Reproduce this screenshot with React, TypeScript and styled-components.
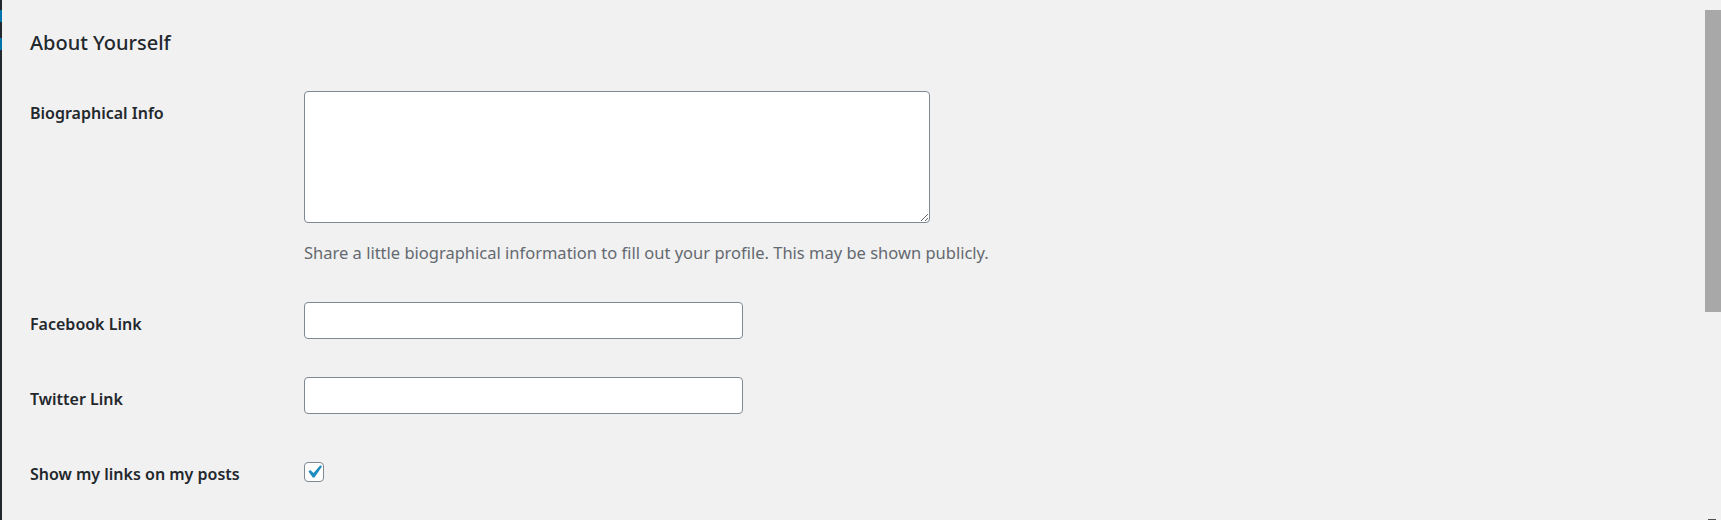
import React from "react";
import styled, { createGlobalStyle } from "styled-components";

const Global = createGlobalStyle`
  html, body { margin: 0; padding: 0; background: #f1f1f1; overflow: hidden; }
  body { font-family: "Noto Sans", "Open Sans", sans-serif; color: #23282d; }
  * { box-sizing: border-box; }
`;

const Shell = styled.div`
  display: flex;
  width: 100vw;
  height: 520px;
  background: #f1f1f1;
`;

const AdminEdge = styled.div`
  width: 2px;
  flex: none;
  display: flex;
  flex-direction: column;
  background: #23282d;
  padding-top: 10px;
  gap: 16px;
`;

const EdgeMark = styled.div`
  height: 12px;
  background: #0073aa;
`;

const Main = styled.main`
  flex: 1;
  padding-left: 28px;
  padding-top: 29px;
`;

const Heading = styled.h2`
  margin: 0 0 34px;
  font-size: 20px;
  line-height: 28px;
  font-weight: 500;
  color: #23282d;
`;

const FormTable = styled.div`
  display: flex;
  flex-direction: column;
  gap: 38px;
`;

const Row = styled.div`
  display: grid;
  grid-template-columns: 274px 1fr;
  align-items: start;
`;

const Label = styled.label`
  font-size: 16px;
  line-height: 20px;
  font-weight: 600;
  color: #23282d;
  padding-top: 12px;
`;

const Field = styled.div`
  display: flex;
  flex-direction: column;
  align-items: flex-start;
`;

const TextArea = styled.textarea`
  width: 626px;
  height: 132px;
  border: 1px solid #7e8993;
  border-radius: 4px;
  background: #fff;
  font: inherit;
  margin: 0;
  display: block;
`;

const TextInput = styled.input`
  width: 439px;
  height: 37px;
  border: 1px solid #7e8993;
  border-radius: 4px;
  background: #fff;
  font: inherit;
  margin: 0;
`;

const Description = styled.p`
  margin: 19px 0 0;
  font-size: 16.5px;
  line-height: 22px;
  color: #646970;
`;

const CheckBox = styled.span`
  margin-top: 10px;
  width: 20px;
  height: 20px;
  border: 1px solid #7e8993;
  border-radius: 4px;
  background: #fff;
  display: inline-flex;
  align-items: center;
  justify-content: center;
  overflow: visible;
  svg { display: block; overflow: visible; flex: none; }
`;

const Scrollbar = styled.div`
  width: 17px;
  flex: none;
  display: flex;
  flex-direction: column;
  align-items: stretch;
  padding-top: 10px;
  background: #f1f1f1;
`;

const Thumb = styled.div`
  height: 302px;
  margin-left: 1px;
  background: #a8a8a8;
`;

const Track = styled.div`
  flex: 1;
`;

const ArrowStub = styled.div`
  height: 1px;
  margin: 0 5px 0 4px;
  background: #505050;
`;

export default function App() {
  return (
    <>
      <Global />
      <Shell>
        <AdminEdge>
          <EdgeMark />
          <EdgeMark />
        </AdminEdge>
        <Main>
          <Heading>About Yourself</Heading>
          <FormTable>
            <Row>
              <Label htmlFor="bio">Biographical Info</Label>
              <Field>
                <TextArea id="bio" />
                <Description>
                  Share a little biographical information to fill out your profile. This may be shown publicly.
                </Description>
              </Field>
            </Row>
            <Row>
              <Label htmlFor="fb">Facebook Link</Label>
              <Field>
                <TextInput id="fb" type="text" />
              </Field>
            </Row>
            <Row>
              <Label htmlFor="tw">Twitter Link</Label>
              <Field>
                <TextInput id="tw" type="text" />
              </Field>
            </Row>
            <Row>
              <Label>Show my links on my posts</Label>
              <Field>
                <CheckBox role="checkbox" aria-checked="true">
                  <svg width="26" height="26" viewBox="0 0 20 20">
                    <path
                      d="M14.83 4.89l1.34.94-5.81 8.38H9.02L5.78 9.67l1.34-1.25 2.57 2.4z"
                      fill="#1e8cbe"
                    />
                  </svg>
                </CheckBox>
              </Field>
            </Row>
          </FormTable>
        </Main>
        <Scrollbar>
          <Thumb />
          <Track />
          <ArrowStub />
        </Scrollbar>
      </Shell>
    </>
  );
}
